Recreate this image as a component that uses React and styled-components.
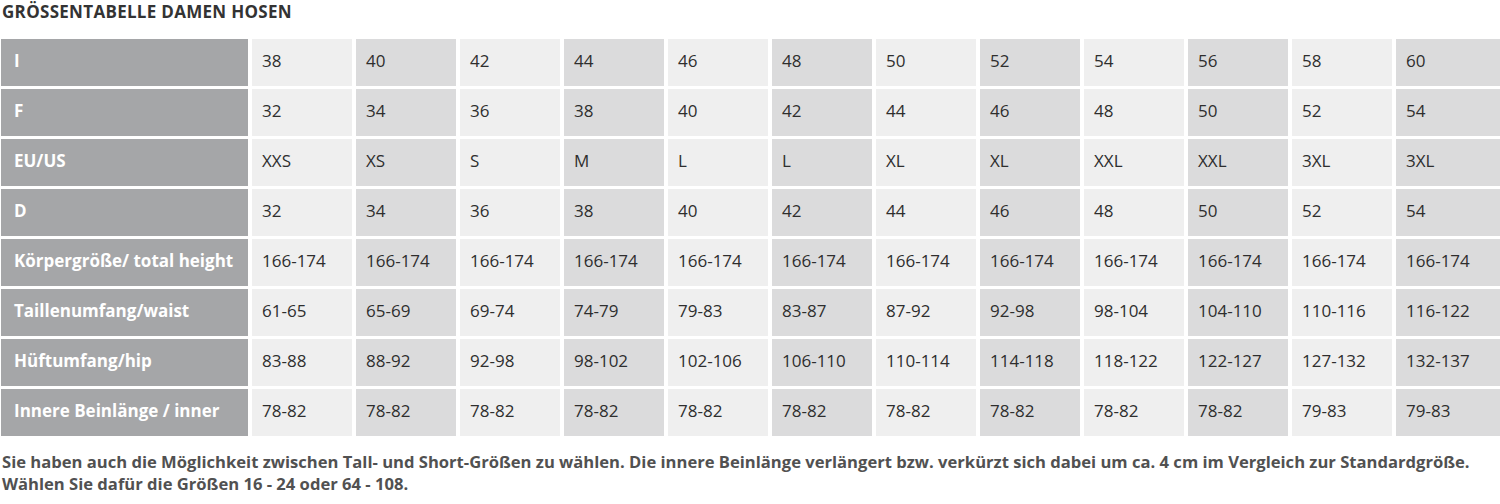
import React from 'react';
import styled, { createGlobalStyle } from 'styled-components';

const GlobalStyle = createGlobalStyle`
  html, body {
    margin: 0;
    padding: 0;
    background: #ffffff;
  }
  body {
    font-family: 'Open Sans', 'Noto Sans', sans-serif;
  }
`;

const Page = styled.div`
  width: 1500px;
  height: 504px;
  overflow: hidden;
  padding: 0 0 0 1px;
  box-sizing: border-box;
  background: #ffffff;
`;

const Title = styled.h1`
  margin: 0;
  padding: 0 0 0 1px;
  height: 39px;
  box-sizing: border-box;
  font-size: 17px;
  line-height: 23px;
  font-weight: 700;
  color: #333333;
  letter-spacing: 0.3px;
`;

const Table = styled.div`
  display: grid;
  grid-template-columns: 247px repeat(11, 100px) 1fr;
  grid-auto-rows: 47px;
  column-gap: 4px;
  row-gap: 3px;
`;

const HeadCell = styled.div`
  display: flex;
  align-items: center;
  padding: 0 0 4px 13px;
  background: #a5a6a8;
  color: #ffffff;
  font-size: 17px;
  font-weight: 700;
  white-space: nowrap;
  overflow: hidden;
`;

const Cell = styled.div`
  display: flex;
  align-items: center;
  padding: 0 0 4px 10px;
  background: ${p => (p.$shade ? '#dbdbdc' : '#efefef')};
  color: #2e2e2e;
  font-size: 17px;
  font-weight: 400;
  white-space: nowrap;
`;

const Note = styled.p`
  margin: 0;
  padding: 15px 0 0 1px;
  font-size: 16.6px;
  line-height: 22px;
  font-weight: 700;
  color: #515151;
  white-space: nowrap;
`;

const rows = [
  ['I', ['38', '40', '42', '44', '46', '48', '50', '52', '54', '56', '58', '60']],
  ['F', ['32', '34', '36', '38', '40', '42', '44', '46', '48', '50', '52', '54']],
  ['EU/US', ['XXS', 'XS', 'S', 'M', 'L', 'L', 'XL', 'XL', 'XXL', 'XXL', '3XL', '3XL']],
  ['D', ['32', '34', '36', '38', '40', '42', '44', '46', '48', '50', '52', '54']],
  ['Körpergröße/ total height', Array(12).fill('166-174')],
  ['Taillenumfang/waist', ['61-65', '65-69', '69-74', '74-79', '79-83', '83-87', '87-92', '92-98', '98-104', '104-110', '110-116', '116-122']],
  ['Hüftumfang/hip', ['83-88', '88-92', '92-98', '98-102', '102-106', '106-110', '110-114', '114-118', '118-122', '122-127', '127-132', '132-137']],
  ['Innere Beinlänge / inner', ['78-82', '78-82', '78-82', '78-82', '78-82', '78-82', '78-82', '78-82', '78-82', '78-82', '79-83', '79-83']],
];

export default function App() {
  return (
    <Page>
      <GlobalStyle />
      <Title>GRÖSSENTABELLE DAMEN HOSEN</Title>
      <Table>
        {rows.map(([label, values]) => (
          <React.Fragment key={label}>
            <HeadCell>{label}</HeadCell>
            {values.map((v, i) => (
              <Cell key={i} $shade={i % 2 === 1}>{v}</Cell>
            ))}
          </React.Fragment>
        ))}
      </Table>
      <Note>
        Sie haben auch die Möglichkeit zwischen Tall- und Short-Größen zu wählen. Die innere Beinlänge verlängert bzw. verkürzt sich dabei um ca. 4 cm im Vergleich zur Standardgröße.
        <br />
        Wählen Sie dafür die Größen 16 - 24 oder 64 - 108.
      </Note>
    </Page>
  );
}
